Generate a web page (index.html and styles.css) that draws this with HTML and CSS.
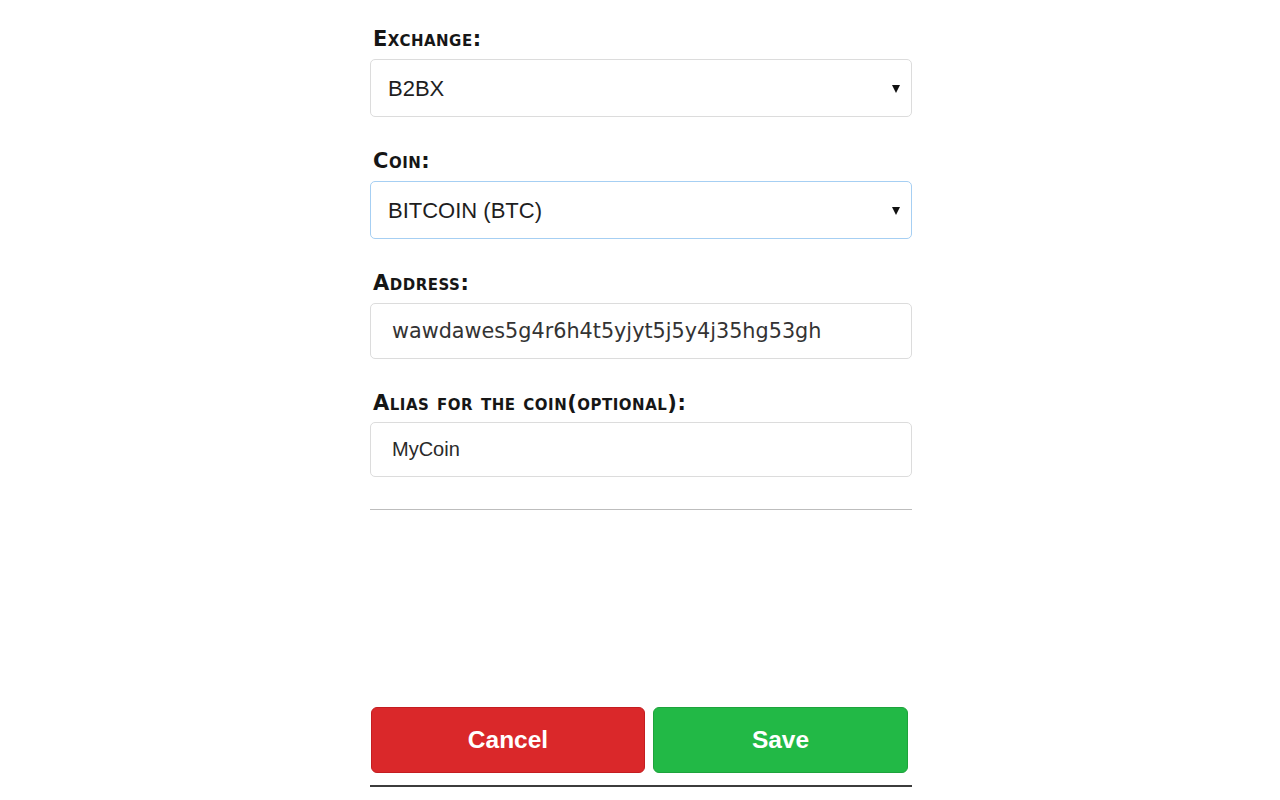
FILE: index.html
```html
<!DOCTYPE html>
<html>
<head>
<meta charset="utf-8">
<title>Add coin</title>
<link rel="stylesheet" href="styles.css">
</head>
<body>
<div class="form">
  <div class="group">
    <label class="label">Exchange:</label>
    <div class="select-wrap">
      <select class="select"><option>B2BX</option></select>
      <span class="arrow"></span>
    </div>
  </div>
  <div class="group">
    <label class="label">Coin:</label>
    <div class="select-wrap">
      <select class="select focused"><option>BITCOIN (BTC)</option></select>
      <span class="arrow"></span>
    </div>
  </div>
  <div class="group">
    <label class="label">Address:</label>
    <input class="input mono" type="text" value="wawdawes5g4r6h4t5yjyt5j5y4j35hg53gh">
  </div>
  <div class="group last">
    <label class="label">Alias for the coin(optional):</label>
    <input class="input" type="text" value="MyCoin">
  </div>
  <div class="divider"></div>
  <div class="actions">
    <button class="btn cancel">Cancel</button>
    <button class="btn save">Save</button>
  </div>
  <div class="bottom-line"></div>
</div>
</body>
</html>
```
FILE: styles.css
```css
html, body {
  margin: 0;
  padding: 0;
  background: #ffffff;
}
.form {
  width: 542px;
  margin-left: calc(50% - 270px);
  padding-top: 27px;
  display: flex;
  flex-direction: column;
}
.group {
  display: flex;
  flex-direction: column;
  margin-bottom: 32px;
}
.group.last {
  margin-bottom: 32px;
}
.label {
  font-family: "DejaVu Sans", Verdana, sans-serif;
  font-weight: bold;
  font-variant: small-caps;
  font-size: 21px;
  letter-spacing: 0.5px;
  line-height: 24px;
  color: #161616;
  padding-left: 3px;
  margin-bottom: 8px;
}
.group.last .label {
  margin-bottom: 7px;
}
.select-wrap {
  position: relative;
}
.select {
  -webkit-appearance: none;
  appearance: none;
  width: 100%;
  height: 58px;
  box-sizing: border-box;
  border: 1px solid #dcdcdc;
  border-radius: 5px;
  background: #fff;
  padding: 0 40px 0 17px;
  font-family: "Liberation Sans", Arial, sans-serif;
  font-size: 22px;
  color: #1e1e1e;
  outline: none;
}
.select.focused {
  border-color: #a6cff3;
}
.arrow {
  position: absolute;
  right: 12px;
  top: 26px;
  width: 0;
  height: 0;
  border-left: 4px solid transparent;
  border-right: 4px solid transparent;
  border-top: 8px solid #111;
}
.input {
  width: 100%;
  height: 56px;
  box-sizing: border-box;
  border: 1px solid #dcdcdc;
  border-radius: 5px;
  background: #fff;
  padding: 0 20px 0 21px;
  font-family: "Liberation Sans", Arial, sans-serif;
  font-size: 20px;
  color: #2a2a2a;
  outline: none;
}
.group.last .input {
  height: 55px;
}
.input.mono {
  font-family: "DejaVu Sans", Verdana, sans-serif;
  font-size: 20.75px;
  color: #333;
}
.divider {
  height: 1px;
  background: #bdbdbd;
  margin-bottom: 197px;
}
.actions {
  display: flex;
  gap: 8px;
  padding-left: 1px;
}
.btn {
  height: 66px;
  border-radius: 6px;
  font-family: "Liberation Sans", Arial, sans-serif;
  font-weight: bold;
  font-size: 24.5px;
  color: #fff;
  cursor: pointer;
  padding: 0;
}
.cancel {
  width: 274px;
  background: #da282a;
  border: 1px solid #c41d20;
}
.save {
  width: 255px;
  background: #22b946;
  border: 1px solid #1ea33c;
}
.bottom-line {
  margin-top: 12px;
  height: 2px;
  background: #3c3c3c;
}
```
